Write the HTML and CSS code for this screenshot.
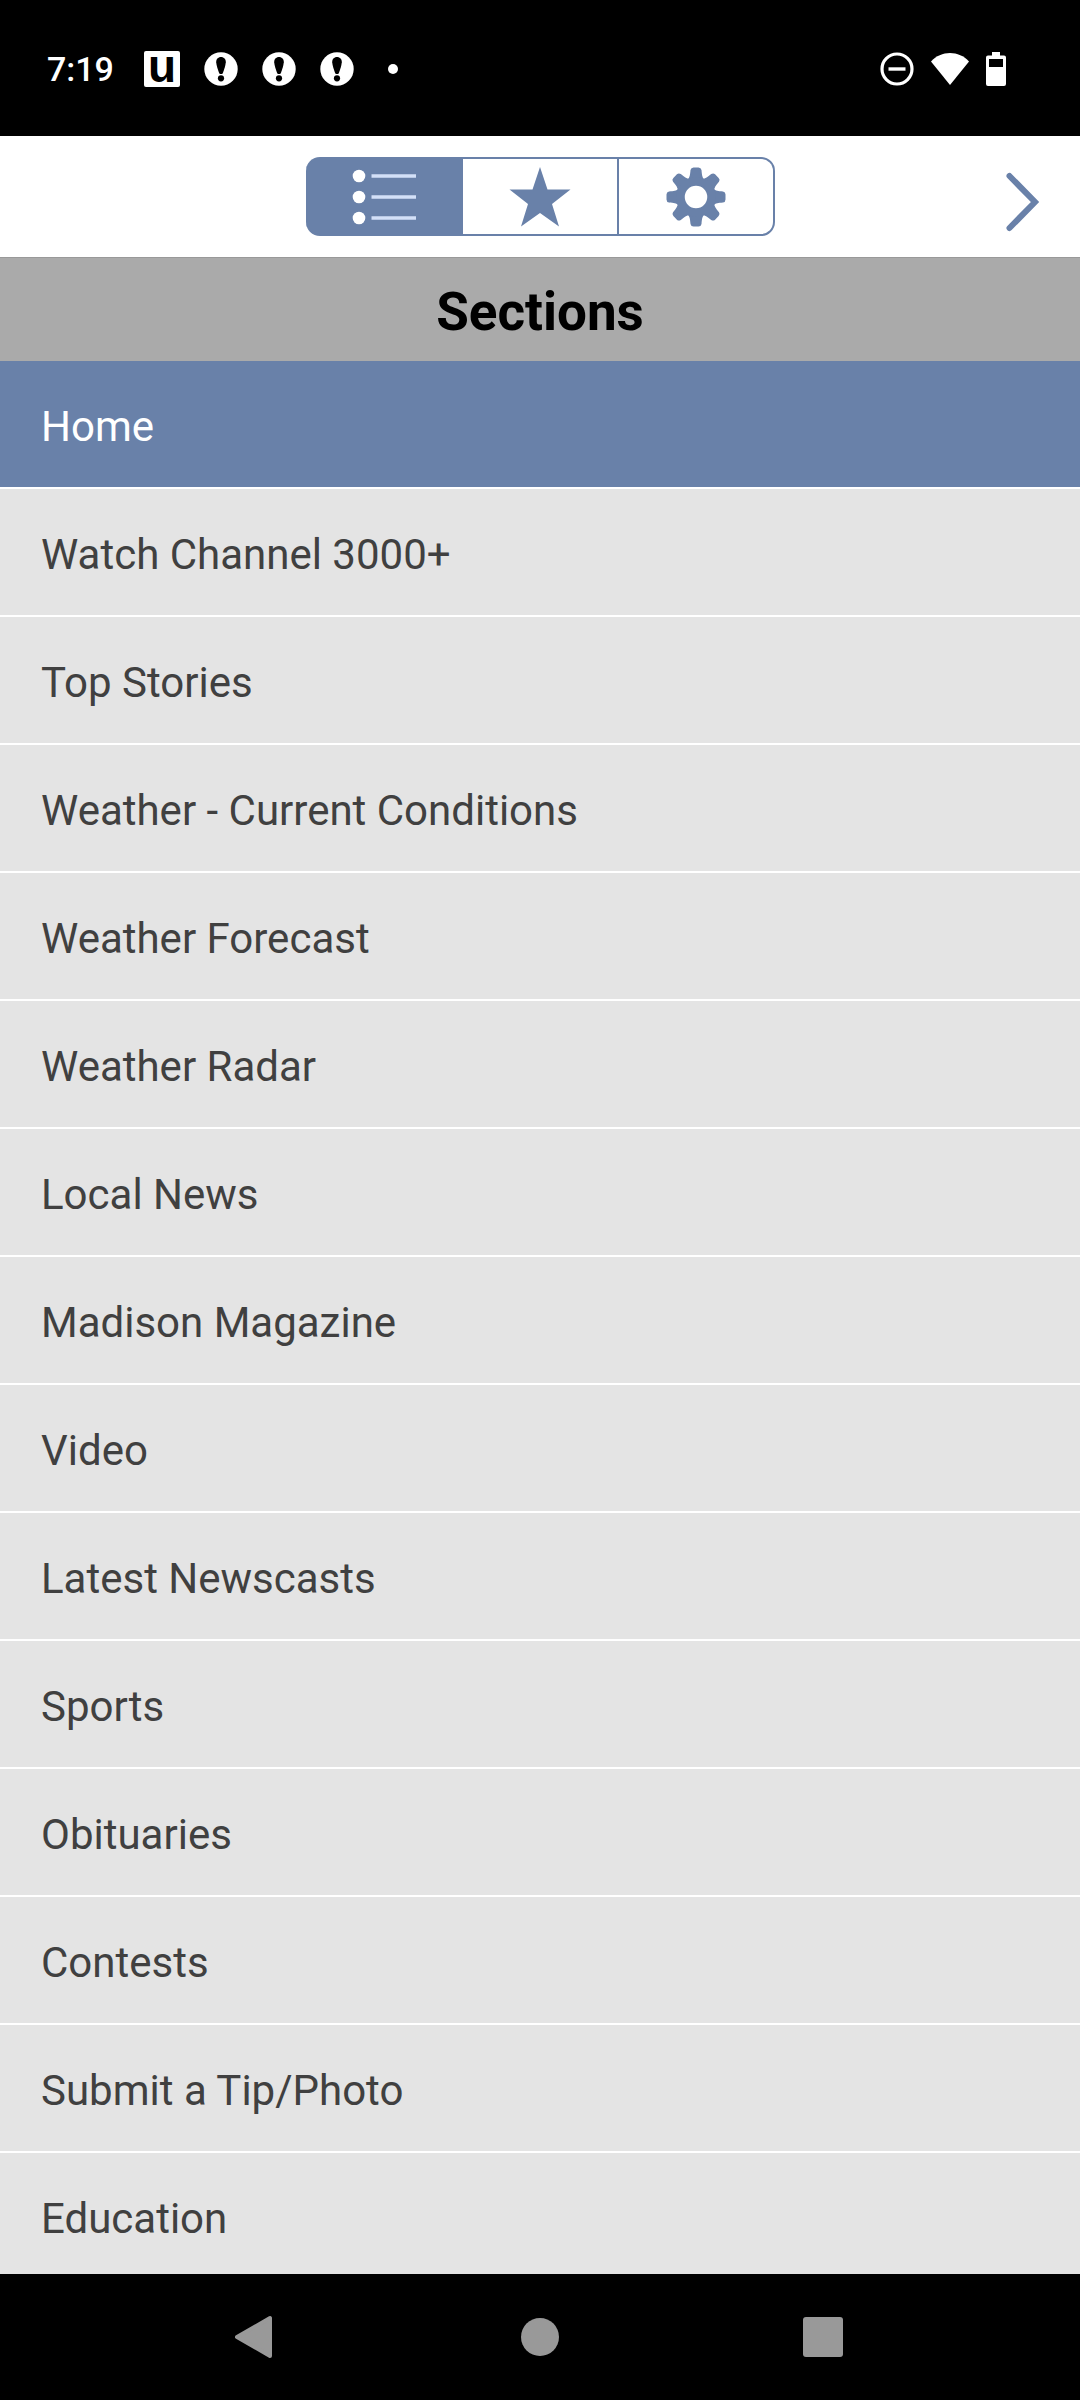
FILE: index.html
```html
<!DOCTYPE html>
<html lang="en">
<head>
<meta charset="utf-8">
<meta name="viewport" content="width=device-width, initial-scale=1">
<title>Sections</title>
<link rel="stylesheet" href="styles.css">
</head>
<body>
<div class="status">
  <div class="status-left">
    <span class="clock">7:19</span>
    <span class="badge-u">u</span>
    <svg class="alert" viewBox="0 0 34 34" aria-hidden="true"><circle cx="17" cy="17" r="16.7" fill="#fff"/><path d="M17 5c3 0 5 2.300 4.800 5.200-.3 3.500-1.700 7.500-3 11-.7 1.200-2.900 1.200-3.600 0-1.300-3.500-2.700-7.500-3-11C12 7.300 14 5 17 5z"/><circle cx="17" cy="26.300" r="3.100"/></svg>
    <svg class="alert" viewBox="0 0 34 34" aria-hidden="true"><circle cx="17" cy="17" r="16.7" fill="#fff"/><path d="M17 5c3 0 5 2.300 4.800 5.200-.3 3.500-1.700 7.500-3 11-.7 1.200-2.900 1.200-3.600 0-1.300-3.500-2.700-7.500-3-11C12 7.300 14 5 17 5z"/><circle cx="17" cy="26.300" r="3.100"/></svg>
    <svg class="alert" viewBox="0 0 34 34" aria-hidden="true"><circle cx="17" cy="17" r="16.7" fill="#fff"/><path d="M17 5c3 0 5 2.300 4.800 5.200-.3 3.500-1.700 7.500-3 11-.7 1.200-2.900 1.200-3.600 0-1.300-3.500-2.700-7.500-3-11C12 7.300 14 5 17 5z"/><circle cx="17" cy="26.300" r="3.100"/></svg>
    <span class="more-dot"></span>
  </div>
  <div class="status-right">
    <svg width="34" height="34" viewBox="0 0 34 34" aria-hidden="true"><circle cx="17" cy="17" r="15" fill="none" stroke="#fff" stroke-width="3.200"/><path d="M8.500 17h17" stroke="#fff" stroke-width="3.400"/></svg>
    <svg width="40" height="34" viewBox="0 0 40 34" aria-hidden="true"><path d="M1 9.500C11-2 29-2 39 9.500L20 33z" fill="#fff"/></svg>
    <svg width="20" height="34" viewBox="0 0 20 34" aria-hidden="true"><path fill="#fff" fill-rule="evenodd" d="M6 0h8v3.500h4a2 2 0 0 1 2 2V32a2 2 0 0 1-2 2H2a2 2 0 0 1-2-2V5.500a2 2 0 0 1 2-2h4zM3 7v8h14V7z"/></svg>
  </div>
</div>

<header class="toolbar">
  <nav class="segments" aria-label="Menu views">
    <button class="segment active" aria-label="Sections"><svg width="68" height="60" viewBox="-4 0 68 60"><g fill="#fff"><circle cx="6" cy="9" r="6.300"/><circle cx="6" cy="30" r="6.300"/><circle cx="6" cy="51" r="6.300"/></g><path d="M18.500 9H63M18.500 30H63M18.500 51H63" stroke="#d3e0f8" stroke-width="3.400"/></svg></button>
    <button class="segment" aria-label="Favorites"><svg width="62" height="60" viewBox="0 0 62 60"><path fill="currentColor" d="M31 0l7.500 22.500h23L43 37l7 22.500L31 46 12 59.500 19 37 .500 22.500h23z"/></svg></button>
    <button class="segment" aria-label="Settings"><svg width="60" height="60" viewBox="-30 -30 60 60"><defs><path id="tooth" d="M-8.500-17C-6-20-6-22-5.500-27q.5-2.500 3-2.500h5q2.500 0 3 2.500C6-22 6-20 8.500-17z"/></defs><g fill="currentColor"><use href="#tooth"/><use href="#tooth" transform="rotate(45)"/><use href="#tooth" transform="rotate(90)"/><use href="#tooth" transform="rotate(135)"/><use href="#tooth" transform="rotate(180)"/><use href="#tooth" transform="rotate(225)"/><use href="#tooth" transform="rotate(270)"/><use href="#tooth" transform="rotate(315)"/></g><circle r="15.500" fill="none" stroke="currentColor" stroke-width="8.500"/></svg></button>
  </nav>
  <button class="next" aria-label="Close menu"><svg width="34" height="60" viewBox="0 0 34 60"><path d="M3.500 4L29 30 3.500 56" fill="none" stroke="currentColor" stroke-width="6" stroke-linecap="round"/></svg></button>
</header>

<h1 class="title">Sections</h1>

<ul class="list">
  <li><a class="current" href="#home">Home</a></li>
  <li><a href="#watch">Watch Channel 3000+</a></li>
  <li><a href="#top">Top Stories</a></li>
  <li><a href="#conditions">Weather - Current Conditions</a></li>
  <li><a href="#forecast">Weather Forecast</a></li>
  <li><a href="#radar">Weather Radar</a></li>
  <li><a href="#local">Local News</a></li>
  <li><a href="#magazine">Madison Magazine</a></li>
  <li><a href="#video">Video</a></li>
  <li><a href="#newscasts">Latest Newscasts</a></li>
  <li><a href="#sports">Sports</a></li>
  <li><a href="#obituaries">Obituaries</a></li>
  <li><a href="#contests">Contests</a></li>
  <li><a href="#submit">Submit a Tip/Photo</a></li>
  <li><a href="#education">Education</a></li>
</ul>

<footer class="system">
  <button aria-label="Back"><svg width="44" height="44" viewBox="0 0 44 44"><path d="M35 3v38L2 22z" fill="#999" stroke="#999" stroke-width="4" stroke-linejoin="round"/></svg></button>
  <button aria-label="Home"><svg width="44" height="44" viewBox="0 0 44 44"><circle cx="22" cy="22" r="19" fill="#999"/></svg></button>
  <button aria-label="Recent apps"><svg width="44" height="44" viewBox="0 0 44 44"><rect x="2" y="2" width="40" height="40" rx="3" fill="#999"/></svg></button>
</footer>
</body>
</html>
```
FILE: styles.css
```css
* {
  box-sizing: border-box;
}

body {
  margin: 0;
  height: 100vh;
  display: flex;
  flex-direction: column;
  background: #fff;
  font-family: Roboto, "Liberation Sans", sans-serif;
}

button {
  margin: 0;
  padding: 0;
  border: 0;
  background: none;
  color: #6981a9;
}

svg {
  display: block;
  flex: none;
}

.status {
  flex: none;
  height: 136px;
  padding: 2px 74px 0 47px;
  display: flex;
  align-items: center;
  justify-content: space-between;
  background: #000;
  color: #fff;
}

.status-left {
  display: flex;
  align-items: center;
  gap: 24px;
}

.clock {
  width: 73px;
  font: 500 34px/40px Roboto, sans-serif;
}

.badge-u {
  width: 36px;
  height: 36px;
  border-radius: 2px;
  background: #fff;
  color: #000;
  font: bold 46px/30px "Liberation Sans", sans-serif;
  text-align: center;
}

.alert {
  width: 34px;
  height: 34px;
}

.more-dot {
  width: 10px;
  height: 10px;
  margin-left: 10px;
  border-radius: 50%;
  background: #fff;
}

.status-right {
  display: flex;
  align-items: center;
  gap: 16px;
}

.toolbar {
  flex: none;
  height: 121px;
  padding: 0 40px;
  display: grid;
  grid-template-columns: 1fr auto 1fr;
  align-items: center;
}

.segments {
  grid-column: 2;
  display: flex;
  height: 79px;
}

.segment {
  width: 156px;
  display: flex;
  align-items: center;
  justify-content: center;
  border: 2px solid #6981a9;
  border-left-width: 0;
}

.segment:first-child {
  width: 157px;
  border-radius: 14px 0 0 14px;
}

.segment:last-child {
  border-radius: 0 14px 14px 0;
}

.segment.active {
  background: #6981a9;
}

.next {
  justify-self: end;
  padding-top: 10px;
}

.title {
  flex: none;
  margin: 0;
  padding: 24px 0 19px;
  border-top: 1px solid #999;
  background: #aaa;
  color: #000;
  font-size: 53px;
  font-weight: 700;
  line-height: 60px;
  text-align: center;
}

.list {
  flex: 1;
  min-height: 0;
  margin: 0;
  padding: 0;
  overflow-y: auto;
  scrollbar-width: none;
  list-style: none;
  background: #e4e4e4;
}

.list a {
  display: block;
  padding: 42px 41px 36px;
  border-bottom: 2px solid #fff;
  color: #404040;
  font-size: 42px;
  line-height: 48px;
  text-decoration: none;
}

.list .current {
  background: #6981a9;
  color: #fff;
}

.system {
  flex: none;
  height: 126px;
  padding: 0 235px;
  display: flex;
  align-items: center;
  justify-content: space-between;
  background: #000;
}
```
